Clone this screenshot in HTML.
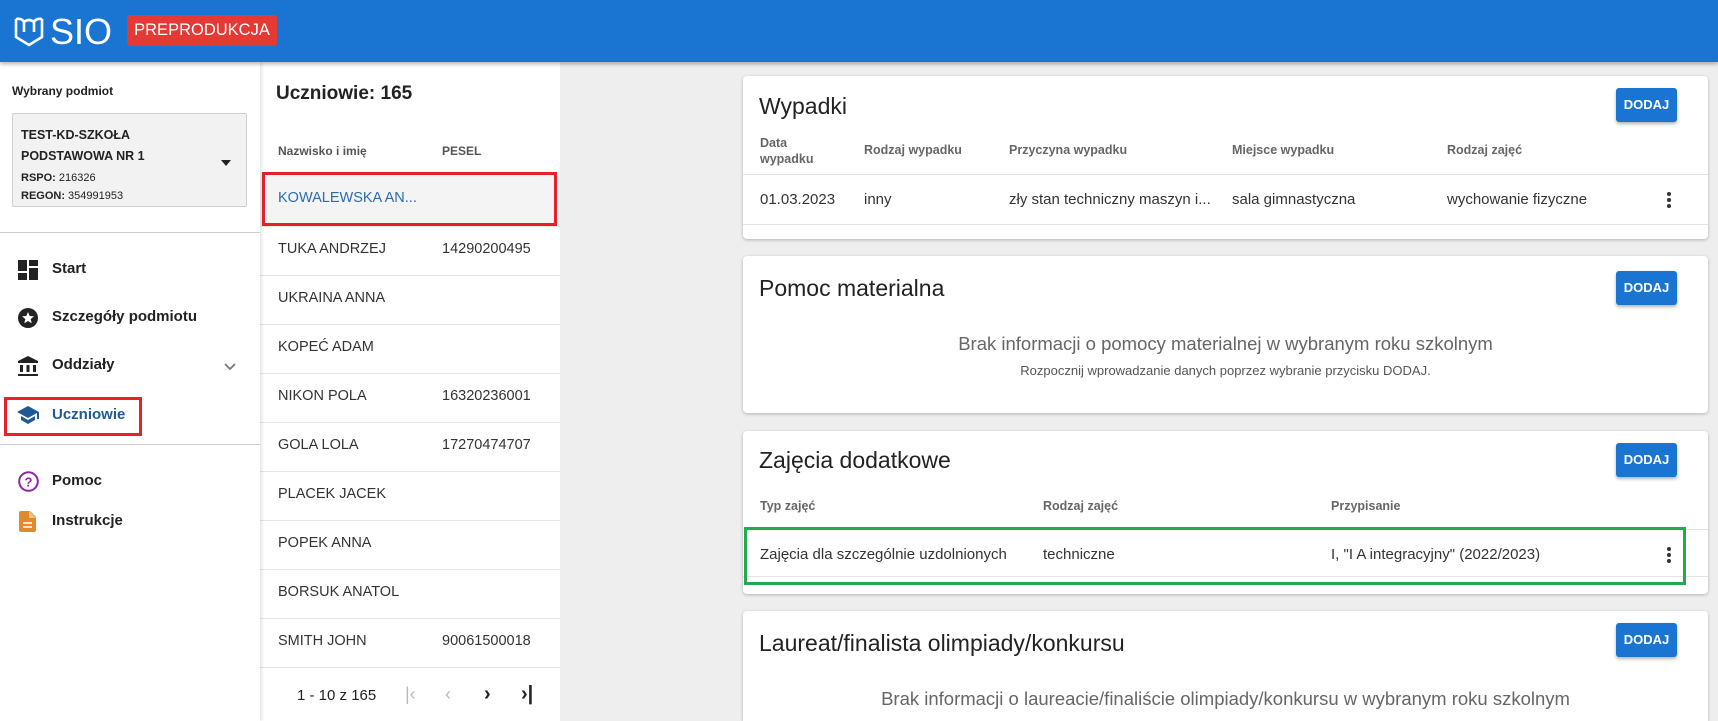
<!DOCTYPE html>
<html style="overflow:hidden;width:1718px;height:721px"><head><meta charset="utf-8"><style>
*{margin:0;padding:0;box-sizing:border-box}
body{width:1718px;height:721px;overflow:hidden;background:#eeeeee;font-family:"Liberation Sans",sans-serif;color:#222;position:relative}
.a{position:absolute;white-space:nowrap}
.hdr{position:absolute;left:0;top:0;width:1718px;height:62px;background:#1a75d2;box-shadow:0 2px 4px rgba(0,0,0,.3);z-index:3}
.side{position:absolute;left:0;top:62px;width:260px;height:659px;background:#fff;box-shadow:1px 0 4px rgba(0,0,0,.15);z-index:2}
.list{position:absolute;left:260px;top:62px;width:300px;height:659px;background:#fff;z-index:1}
.card{position:absolute;left:743px;width:965px;background:#fff;border-radius:4px;box-shadow:0 1px 3px rgba(0,0,0,.25)}
.btn{position:absolute;left:873px;width:61px;height:34px;background:#1a75d2;color:#fff;font-size:13px;font-weight:bold;text-align:center;line-height:34px;border-radius:3px;box-shadow:0 2px 3px rgba(0,0,0,.3)}
.t{font-size:23px;color:#222}
.th{font-size:12.5px;font-weight:bold;color:#666}
.td{font-size:15px;color:#333}
.ln{position:absolute;left:0;right:0;height:1px;background:#e4e4e4}
.row{position:absolute;left:0;width:300px;height:1px;background:#e6e6e6}
.nm{font-size:14.5px;color:#333;left:18px}
.ps{font-size:14.5px;color:#333;left:182px}
.nav{font-size:15px;font-weight:bold;color:#222;left:52px}
.dots{position:absolute;width:4px}
.dots i{display:block;width:4px;height:4px;border-radius:2px;background:#333;margin-bottom:2px}
</style></head><body>
<div class="hdr">
<svg class="a" style="left:14px;top:16px" width="30" height="31" viewBox="0 0 30 31"><path d="M2 3 V21 L15 29 L28 21 V3 M2 3 Q8 2 10 6 M28 3 Q22 2 20 6 M10 6 V16 M20 6 V16 M10 6 Q15 2 20 6" fill="none" stroke="#fff" stroke-width="2.6"/></svg>
<div class="a" style="left:50px;top:11px;font-size:36px;color:#fff;letter-spacing:0px">SIO</div>
<div class="a" style="left:127px;top:15px;width:150px;height:31px;background:#e53935;border-radius:3px;color:#fff;font-size:16.5px;line-height:31px;text-align:center">PREPRODUKCJA</div>
</div>
<div class="side">
<div class="a" style="left:12px;top:22px;font-size:12px;font-weight:bold">Wybrany podmiot</div>
<div class="a" style="left:12px;top:51px;width:235px;height:94px;background:#f2f2f2;border:1px solid #d0d0d0;border-radius:2px"></div>
<div class="a" style="left:21px;top:63px;font-size:12.5px;font-weight:bold;line-height:21px">TEST-KD-SZKOŁA<br>PODSTAWOWA NR 1</div>
<div class="a" style="left:21px;top:107px;font-size:11px;line-height:18px"><b>RSPO:</b> 216326<br><b>REGON:</b> 354991953</div>
<div class="a" style="left:221px;top:98px;width:0;height:0;border-left:5px solid transparent;border-right:5px solid transparent;border-top:6px solid #222"></div>
<div class="a" style="left:0;top:170px;width:260px;height:1px;background:#ccc"></div>
<svg class="a" style="left:18px;top:198px" width="20" height="20" viewBox="0 0 20 20"><path d="M0 0h9v11H0zM11 0h9v6h-9zM11 8h9v12h-9zM0 13h9v7H0z" fill="#222"/></svg>
<div class="a nav" style="top:198px">Start</div>
<svg class="a" style="left:18px;top:246px" width="20" height="20" viewBox="0 0 20 20"><circle cx="10" cy="10" r="10" fill="#222"/><path d="M10 4l1.7 4 4.3.3-3.3 2.8 1 4.2L10 13l-3.7 2.3 1-4.2L4 8.3 8.3 8z" fill="#fff"/></svg>
<div class="a nav" style="top:246px">Szczegóły podmiotu</div>
<svg class="a" style="left:18px;top:294px" width="20" height="20" viewBox="0 0 20 20"><path d="M10 0L0 5v2h20V5zM2 9h3v7H2zM8.5 9h3v7h-3zM15 9h3v7h-3zM0 18h20v2H0z" fill="#222"/></svg>
<div class="a nav" style="top:294px">Oddziały</div>
<svg class="a" style="left:224px;top:301px" width="12" height="8" viewBox="0 0 12 8"><path d="M1 1l5 5 5-5" fill="none" stroke="#777" stroke-width="1.8"/></svg>
<div class="a" style="left:4px;top:335px;width:138px;height:39px;border:3px solid #e8202a"></div>
<svg class="a" style="left:17px;top:344px" width="22" height="18" viewBox="0 0 22 18"><path d="M11 0L0 6l11 6 9-5v6h2V6zM4 10v4l7 4 7-4v-4l-7 4z" fill="#1f5a96"/></svg>
<div class="a nav" style="top:344px;color:#1f5a96">Uczniowie</div>
<div class="a" style="left:0;top:382px;width:260px;height:1px;background:#ccc"></div>
<svg class="a" style="left:18px;top:409px" width="21" height="21" viewBox="0 0 21 21"><circle cx="10.5" cy="10.5" r="9.3" fill="none" stroke="#8e24aa" stroke-width="2"/><text x="10.5" y="15.5" font-size="13" font-family="Liberation Sans" font-weight="bold" fill="#8e24aa" text-anchor="middle">?</text></svg>
<div class="a nav" style="top:410px">Pomoc</div>
<svg class="a" style="left:19px;top:449px" width="17" height="21" viewBox="0 0 17 21"><path d="M0 2a2 2 0 012-2h9l6 6v13a2 2 0 01-2 2H2a2 2 0 01-2-2z" fill="#e08a2c"/><path d="M4 12h9M4 16h9" stroke="#fff" stroke-width="1.6"/><path d="M10 0v7h7" fill="#f3c08a"/></svg>
<div class="a nav" style="top:450px">Instrukcje</div>
</div>
<div class="list">
<div class="a" style="left:16px;top:21px;font-size:19px;font-weight:bold;color:#222">Uczniowie: 165</div>
<div class="a" style="left:18px;top:82px;font-size:12px;font-weight:bold;color:#555">Nazwisko i imię</div>
<div class="a" style="left:182px;top:82px;font-size:12px;font-weight:bold;color:#555">PESEL</div>
<div class="a" style="left:0;top:113px;width:300px;height:50px;background:#f4f4f4"></div>
<div class="a" style="left:2px;top:110px;width:295px;height:54px;border:3px solid #e8202a"></div>
<div class="a nm" style="top:128px;color:#2a6cb0">KOWALEWSKA AN...</div>
<div class="row" style="top:164px"></div>
<div class="a nm" style="top:179px">TUKA ANDRZEJ</div><div class="a ps" style="top:179px">14290200495</div>
<div class="row" style="top:213px"></div>
<div class="a nm" style="top:228px">UKRAINA ANNA</div>
<div class="row" style="top:262px"></div>
<div class="a nm" style="top:277px">KOPEĆ ADAM</div>
<div class="row" style="top:311px"></div>
<div class="a nm" style="top:326px">NIKON POLA</div><div class="a ps" style="top:326px">16320236001</div>
<div class="row" style="top:360px"></div>
<div class="a nm" style="top:375px">GOLA LOLA</div><div class="a ps" style="top:375px">17270474707</div>
<div class="row" style="top:409px"></div>
<div class="a nm" style="top:424px">PLACEK JACEK</div>
<div class="row" style="top:458px"></div>
<div class="a nm" style="top:473px">POPEK ANNA</div>
<div class="row" style="top:507px"></div>
<div class="a nm" style="top:522px">BORSUK ANATOL</div>
<div class="row" style="top:556px"></div>
<div class="a nm" style="top:571px">SMITH JOHN</div><div class="a ps" style="top:571px">90061500018</div>
<div class="row" style="top:605px"></div>
<div class="a" style="left:37px;top:625px;font-size:15px;color:#222">1 - 10 z 165</div>
<div class="a" style="left:145px;top:622px;font-size:18px;color:#bbb">|‹</div>
<div class="a" style="left:185px;top:622px;font-size:18px;color:#bbb">‹</div>
<div class="a" style="left:224px;top:621px;font-size:20px;font-weight:bold;color:#222">›</div>
<div class="a" style="left:261px;top:621px;font-size:20px;font-weight:bold;color:#222">›|</div>
</div>

<div class="card" style="top:76px;height:163px">
<div class="a t" style="left:16px;top:17px">Wypadki</div>
<div class="btn" style="top:12px">DODAJ</div>
<div class="a th" style="left:17px;top:59px;line-height:16px">Data<br>wypadku</div>
<div class="a th" style="left:121px;top:67px">Rodzaj wypadku</div>
<div class="a th" style="left:266px;top:67px">Przyczyna wypadku</div>
<div class="a th" style="left:489px;top:67px">Miejsce wypadku</div>
<div class="a th" style="left:704px;top:67px">Rodzaj zajęć</div>
<div class="ln" style="top:98px"></div>
<div class="a td" style="left:17px;top:115px">01.03.2023</div>
<div class="a td" style="left:121px;top:115px">inny</div>
<div class="a td" style="left:266px;top:115px">zły stan techniczny maszyn i...</div>
<div class="a td" style="left:489px;top:115px">sala gimnastyczna</div>
<div class="a td" style="left:704px;top:115px">wychowanie fizyczne</div>
<div class="dots" style="left:924px;top:116px"><i></i><i></i><i></i></div>
<div class="ln" style="top:148px"></div>
</div>

<div class="card" style="top:256px;height:157px">
<div class="a t" style="left:16px;top:19px">Pomoc materialna</div>
<div class="btn" style="top:15px">DODAJ</div>
<div class="a" style="left:0;width:965px;top:77px;text-align:center;font-size:18.5px;color:#666">Brak informacji o pomocy materialnej w wybranym roku szkolnym</div>
<div class="a" style="left:0;width:965px;top:107px;text-align:center;font-size:13px;color:#555">Rozpocznij wprowadzanie danych poprzez wybranie przycisku DODAJ.</div>
</div>

<div class="card" style="top:431px;height:163px">
<div class="a t" style="left:16px;top:16px">Zajęcia dodatkowe</div>
<div class="btn" style="top:12px">DODAJ</div>
<div class="a th" style="left:17px;top:68px">Typ zajęć</div>
<div class="a th" style="left:300px;top:68px">Rodzaj zajęć</div>
<div class="a th" style="left:588px;top:68px">Przypisanie</div>
<div class="ln" style="top:98px"></div>
<div class="a td" style="left:17px;top:115px">Zajęcia dla szczególnie uzdolnionych</div>
<div class="a td" style="left:300px;top:115px">techniczne</div>
<div class="a td" style="left:588px;top:115px">I, "I A integracyjny" (2022/2023)</div>
<div class="dots" style="left:924px;top:116px"><i></i><i></i><i></i></div>
<div class="ln" style="top:145px"></div>
<div class="a" style="left:1px;top:96px;width:942px;height:58px;border:3px solid #22ab4a"></div>
</div>

<div class="card" style="top:611px;height:110px;border-radius:4px 4px 0 0">
<div class="a t" style="left:16px;top:19px">Laureat/finalista olimpiady/konkursu</div>
<div class="btn" style="top:12px">DODAJ</div>
<div class="a" style="left:0;width:965px;top:77px;text-align:center;font-size:18.5px;color:#666">Brak informacji o laureacie/finaliście olimpiady/konkursu w wybranym roku szkolnym</div>
</div>
</body></html>
